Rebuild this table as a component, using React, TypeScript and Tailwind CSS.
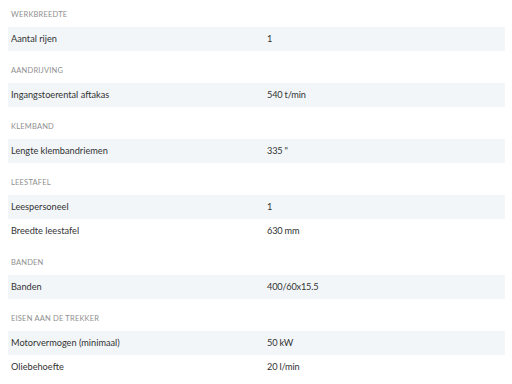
import React from "react";

type Row = [string, string];
const sections: { title: string; rows: Row[] }[] = [
  { title: "WERKBREEDTE", rows: [["Aantal rijen", "1"]] },
  { title: "AANDRIJVING", rows: [["Ingangstoerental aftakas", "540 t/min"]] },
  { title: "KLEMBAND", rows: [["Lengte klembandriemen", "335 \""]] },
  { title: "LEESTAFEL", rows: [["Leespersoneel", "1"], ["Breedte leestafel", "630 mm"]] },
  { title: "BANDEN", rows: [["Banden", "400/60x15.5"]] },
  { title: "EISEN AAN DE TREKKER", rows: [["Motorvermogen (minimaal)", "50 kW"], ["Oliebehoefte", "20 l/min"]] },
];

export default function App() {
  return (
    <div className="w-[512px] h-[384px] bg-white pl-2 pr-[7px] overflow-hidden" style={{ fontFamily: "Lato, 'Open Sans', sans-serif" }}>
      {sections.map((s, i) => (
        <div key={s.title} className={i === 0 ? "" : "mt-[5px]"}>
          <div className="h-[27px] pt-[9px] pl-[3px] text-[7.5px] leading-[12px] text-[#8f8f8f] tracking-[0.2px]">{s.title}</div>
          {s.rows.map((r, j) => (
            <div key={r[0]} className={`grid grid-cols-[256px_1fr] h-[24px] items-center text-[9.2px] text-[#333] ${j % 2 === 0 ? "bg-[#f2f6f9]" : ""}`}>
              <div className="pl-[3px]">{r[0]}</div>
              <div className="pl-[3px] tracking-[-0.2px]">{r[1]}</div>
            </div>
          ))}
        </div>
      ))}
    </div>
  );
}
